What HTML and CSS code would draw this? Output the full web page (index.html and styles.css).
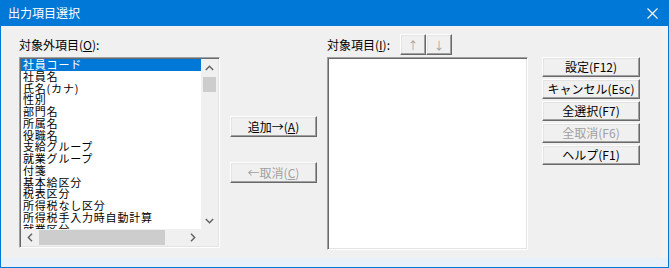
FILE: index.html
```html
<!DOCTYPE html>
<html lang="ja">
<head>
<meta charset="utf-8">
<title>出力項目選択</title>
<link rel="stylesheet" href="styles.css">
</head>
<body>
<div class="window">
  <div class="titlebar">
    <span class="title">出力項目選択</span>
    <svg class="close" width="11" height="11" viewBox="0 0 11 11"><path d="M0.5 0.5 L10.5 10.5 M10.5 0.5 L0.5 10.5" stroke="#fff" stroke-width="1.1" fill="none"/></svg>
  </div>
  <div class="frame">
    <div class="client">
      <div class="col col-list">
        <div class="label-row"><span class="label">対象外項目(<u>O</u>):</span></div>
        <div class="listbox">
          <div class="list-top">
            <ul class="items">
              <li class="sel">社員コード</li>
              <li>社員名</li>
              <li>氏名(カナ)</li>
              <li>性別</li>
              <li>部門名</li>
              <li>所属名</li>
              <li>役職名</li>
              <li>支給グループ</li>
              <li>就業グループ</li>
              <li>付箋</li>
              <li>基本給区分</li>
              <li>税表区分</li>
              <li>所得税なし区分</li>
              <li>所得税手入力時自動計算</li>
              <li>就業区分</li>
            </ul>
            <div class="vscroll">
              <div class="sb-btn"><svg width="9" height="6" viewBox="0 0 9 6"><path d="M0.8 5 L4.5 1.3 L8.2 5" stroke="#606060" stroke-width="1.4" fill="none"/></svg></div>
              <div class="v-track"><div class="v-thumb"></div></div>
              <div class="sb-btn"><svg width="9" height="6" viewBox="0 0 9 6"><path d="M0.8 1 L4.5 4.7 L8.2 1" stroke="#606060" stroke-width="1.4" fill="none"/></svg></div>
            </div>
          </div>
          <div class="hscroll-row">
            <div class="hscroll">
              <div class="sb-btn h"><svg width="6" height="9" viewBox="0 0 6 9"><path d="M5 0.8 L1.3 4.5 L5 8.2" stroke="#606060" stroke-width="1.4" fill="none"/></svg></div>
              <div class="h-track"><div class="h-thumb"></div></div>
              <div class="sb-btn h"><svg width="6" height="9" viewBox="0 0 6 9"><path d="M1 0.8 L4.7 4.5 L1 8.2" stroke="#606060" stroke-width="1.4" fill="none"/></svg></div>
            </div>
            <div class="corner"></div>
          </div>
        </div>
      </div>
      <div class="col col-mid">
        <button class="btn mid add">追加→(<u>A</u>)</button>
        <button class="btn mid disabled">←取消(<u>C</u>)</button>
      </div>
      <div class="col col-list">
        <div class="label-row">
          <span class="label">対象項目(<u>I</u>):</span>
          <div class="arrows">
            <button class="btn arrow disabled">↑</button>
            <button class="btn arrow disabled">↓</button>
          </div>
        </div>
        <div class="listbox tall"></div>
      </div>
      <div class="col col-btns">
        <button class="btn side">設定(F12)</button>
        <button class="btn side">キャンセル(Esc)</button>
        <button class="btn side">全選択(F7)</button>
        <button class="btn side disabled">全取消(F6)</button>
        <button class="btn side">ヘルプ(F1)</button>
      </div>
    </div>
    <div class="bottom-strip"></div>
  </div>
</div>
</body>
</html>
```

FILE: styles.css
```css
* { box-sizing: border-box; }
html, body {
  margin: 0;
  padding: 0;
  background: #ffffff;
}
body {
  font-family: "Noto Sans CJK JP", "Noto Sans", sans-serif;
  font-size: 12px;
  color: #000;
}
.window {
  width: 669px;
  height: 268px;
  display: flex;
  flex-direction: column;
}
.titlebar {
  height: 26px;
  background: #0078d7;
  display: flex;
  align-items: center;
  justify-content: space-between;
  padding: 0 11px 0 8px;
  color: #fff;
}
.title {
  font-size: 12px;
  line-height: 14px;
}
.close { display: block; }
.frame {
  flex: 1;
  border: 1px solid #0078d7;
  border-top: none;
  background: #f4f2f0;
  display: flex;
  flex-direction: column;
  padding-left: 2px;
}
.client {
  flex: 1;
  background: #f0f0f0;
  margin-right: 7px;
  display: flex;
  padding: 8px 0 0 16px;
}
.bottom-strip {
  height: 9px;
  background: #e8f1f9;
  margin-left: -2px;
}
.col { display: flex; flex-direction: column; }
.col-list { width: 201px; }
.label-row {
  height: 23px;
  display: flex;
  align-items: flex-start;
}
.label {
  line-height: 14px;
  padding-top: 4px;
  white-space: nowrap;
}
.col-list + .col-mid { margin-left: 10px; }
.col-mid + .col-list { margin-left: 10px; }
.col-btns { margin-left: 14px; padding-top: 23px; gap: 2px; }
.col-mid { width: 87px; padding-top: 82px; }

.listbox {
  height: 191px;
  border-top: 1px solid #a0a0a0;
  border-left: 1px solid #a0a0a0;
  border-right: 1px solid #ffffff;
  border-bottom: 1px solid #ffffff;
  box-shadow: inset 1px 1px 0 #696969, inset -1px -1px 0 #e3e3e3;
  background: #fff;
  padding: 1px;
  display: flex;
  flex-direction: column;
  overflow: hidden;
}
.listbox.tall { height: 193px; }
.list-top {
  flex: 1;
  display: flex;
  min-height: 0;
}
.items {
  list-style: none;
  margin: 0;
  padding: 0;
  flex: 1;
  overflow: hidden;
}
.items li {
  height: 11.75px;
  line-height: 11.75px;
  font-size: 11px;
  letter-spacing: 0.8px;
  padding-left: 2px;
  white-space: nowrap;
}
.items li.sel {
  background: #0078d7;
  color: #fff;
}
.vscroll {
  width: 17px;
  background: #f0f0f0;
  display: flex;
  flex-direction: column;
}
.sb-btn {
  width: 17px;
  height: 17px;
  display: flex;
  align-items: center;
  justify-content: center;
  flex: none;
}
.v-track { flex: 1; padding: 1px 1px; }
.v-thumb { height: 15px; background: #cdcdcd; margin: 0 1px; }
.hscroll-row { height: 17px; display: flex; }
.hscroll { flex: 1; display: flex; background: #f0f0f0; }
.h-track { flex: 1; padding: 1px 0; }
.h-thumb { width: 126px; height: 15px; background: #cdcdcd; margin-left: 1px; }
.corner { width: 17px; background: #f0f0f0; }

.btn {
  font-family: "Noto Sans CJK JP", "Noto Sans", sans-serif;
  font-size: 12px;
  line-height: 14px;
  color: #000;
  background: #f0f0f0;
  border: 1px solid;
  border-color: #ffffff #696969 #696969 #ffffff;
  box-shadow: inset -1px -1px 0 #a0a0a0, inset 1px 1px 0 #e3e3e3;
  padding: 0;
  margin: 0;
  white-space: nowrap;
  display: flex;
  align-items: center;
  justify-content: center;
}
.btn u { text-underline-offset: 1px; }
.btn.disabled { color: #a0a0a0; }
.mid { width: 87px; height: 21px; }
.mid.add { margin-bottom: 25px; }
.side { width: 98px; height: 20px; }
.arrows { display: flex; margin-left: 10px; padding-top: 0; }
.arrow { width: 26px; height: 21px; font-size: 11px; }
```
